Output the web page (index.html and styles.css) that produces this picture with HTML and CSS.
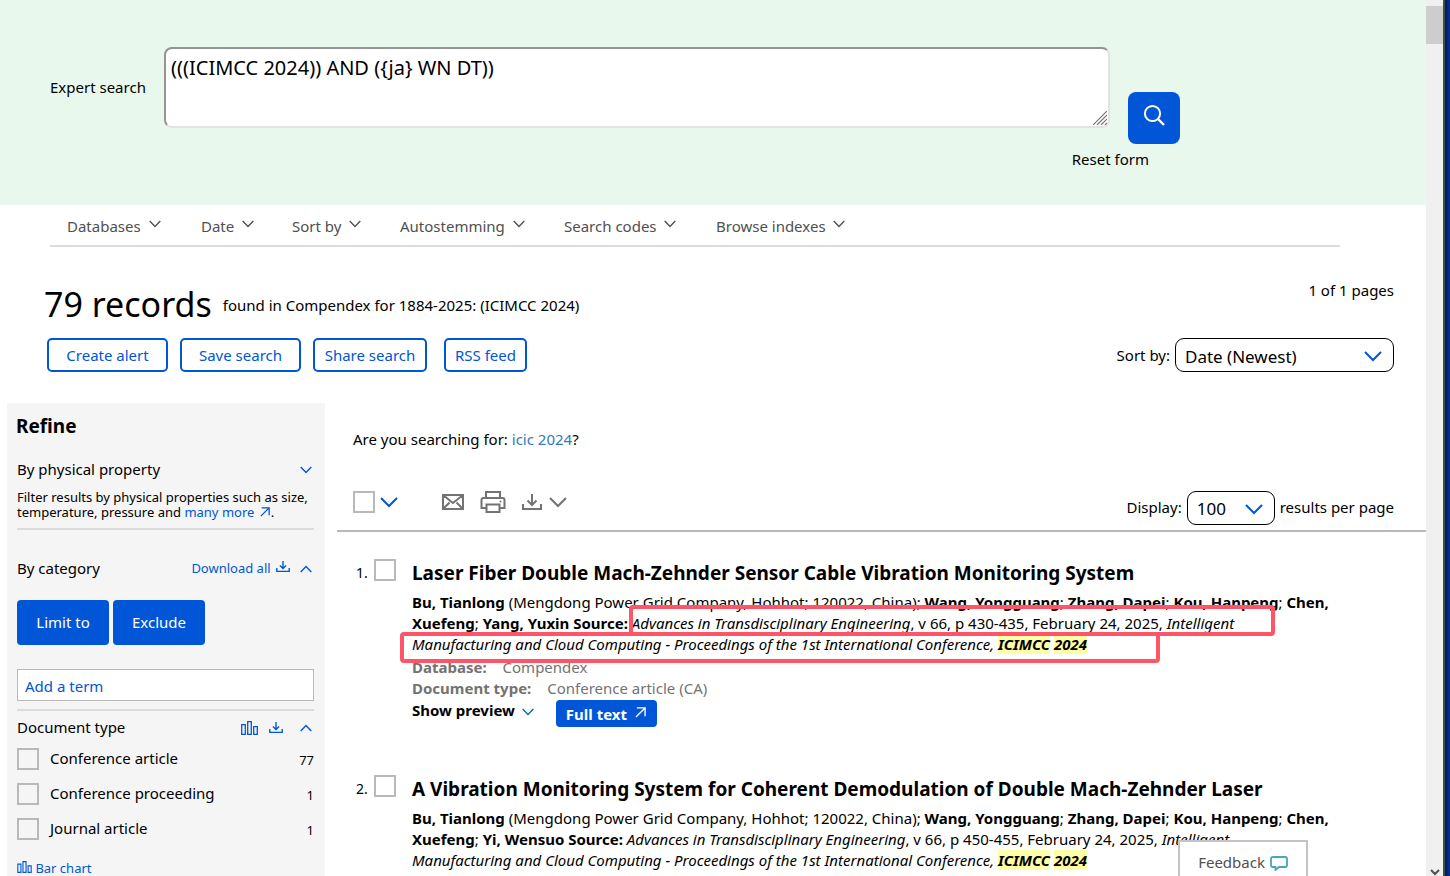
FILE: index.html
```html
<!DOCTYPE html>
<html lang="en">
<head>
<meta charset="UTF-8">
<title>Expert search results</title>
<link rel="stylesheet" href="styles.css">
</head>
<body>

<!-- Icons that are used more than once -->
<svg class="sprite" aria-hidden="true">
  <symbol id="down" viewBox="0 0 18 11"><path d="M1 1l8 8 8-8" fill="none" stroke="currentColor" stroke-width="2"/></symbol>
  <symbol id="down-thin" viewBox="0 0 12 8"><path d="M.7 1L6 6.500 11.300 1" fill="none" stroke="currentColor" stroke-width="1.400"/></symbol>
  <symbol id="up-thin" viewBox="0 0 12 8"><path d="M.7 7L6 1.500 11.300 7" fill="none" stroke="currentColor" stroke-width="1.400"/></symbol>
  <symbol id="download" viewBox="0 0 20 16"><path d="M1 10v5h18v-5M10 0v11M5.500 6.500L10 11l4.500-4.500" fill="none" stroke="currentColor" stroke-width="2"/></symbol>
  <symbol id="bars" viewBox="0 0 17 14"><path d="M.7 3.700h3.600v9.600H.7zM6.700.7h3.600v12.600H6.700zM12.700 5.700h3.600v7.600h-3.600z" fill="none" stroke="currentColor" stroke-width="1.300"/></symbol>
  <symbol id="arrow" viewBox="0 0 12 12"><path d="M1 11L11 1M2 1h9v9" fill="none" stroke="currentColor" stroke-width="1.500"/></symbol>
</svg>

<main class="page">

  <form class="search">
    <label class="search-label" for="query">Expert search</label>
    <div class="search-box">
      <textarea id="query" class="search-input" spellcheck="false">(((ICIMCC 2024)) AND ({ja} WN DT))</textarea>
      <svg class="grip" viewBox="0 0 14 14"><path d="M0 14L14 0M4 14L14 4M8 14l6-6M12 14l2-2" stroke="#777" stroke-width="1.200"/></svg>
    </div>
    <button type="button" class="search-button" aria-label="Search">
      <svg width="22" height="22" viewBox="0 0 22 22"><circle cx="9.500" cy="9.500" r="7.600" fill="none" stroke="#fff" stroke-width="2"/><path d="M15 15l6 6" stroke="#fff" stroke-width="2.400"/></svg>
    </button>
    <a class="reset" href="#">Reset form</a>
  </form>

  <nav class="filters">
    <a href="#">Databases <svg><use href="#down-thin"/></svg></a>
    <a href="#">Date <svg><use href="#down-thin"/></svg></a>
    <a href="#">Sort by <svg><use href="#down-thin"/></svg></a>
    <a href="#">Autostemming <svg><use href="#down-thin"/></svg></a>
    <a href="#">Search codes <svg><use href="#down-thin"/></svg></a>
    <a href="#">Browse indexes <svg><use href="#down-thin"/></svg></a>
  </nav>

  <header class="summary">
    <div class="summary-text">
      <h1 class="summary-title">79 records</h1>
      <p>found in Compendex for 1884-2025: (ICIMCC 2024)</p>
    </div>
    <p class="pages">1 of 1 pages</p>
  </header>

  <div class="actions">
    <button type="button" class="outline">Create alert</button>
    <button type="button" class="outline">Save search</button>
    <button type="button" class="outline outline-share">Share search</button>
    <button type="button" class="outline outline-rss">RSS feed</button>
    <div class="picker">
      <label for="sort">Sort by:</label>
      <span class="select">
        <select id="sort"><option>Date (Newest)</option></select>
        <svg><use href="#down"/></svg>
      </span>
    </div>
  </div>

  <div class="columns">

    <aside class="refine">
      <h2 class="refine-title">Refine</h2>

      <div class="facet-head">
        <h3>By physical property</h3>
        <button type="button" class="icon" aria-label="Expand"><svg class="chev"><use href="#down-thin"/></svg></button>
      </div>
      <p class="hint">Filter results by physical properties such as size, <br>temperature, pressure and <a href="#">many more <svg><use href="#arrow"/></svg></a>.</p>
      <hr class="rule">

      <div class="facet-head category">
        <h3>By category</h3>
        <a class="small" href="#">Download all <svg class="dl"><use href="#download"/></svg></a>
        <button type="button" class="icon" aria-label="Collapse"><svg class="chev"><use href="#up-thin"/></svg></button>
      </div>
      <div class="facet-buttons">
        <button type="button" class="solid">Limit to</button>
        <button type="button" class="solid">Exclude</button>
      </div>
      <input class="term" type="text" placeholder="Add a term" aria-label="Add a term">
      <hr class="rule">

      <div class="facet-head doctype">
        <h3>Document type</h3>
        <button type="button" class="icon" aria-label="Chart"><svg class="bars"><use href="#bars"/></svg></button>
        <button type="button" class="icon" aria-label="Download"><svg class="dl"><use href="#download"/></svg></button>
        <button type="button" class="icon" aria-label="Collapse"><svg class="chev"><use href="#up-thin"/></svg></button>
      </div>
      <ul class="facet-list">
        <li><input type="checkbox" class="box" id="ca"><label for="ca">Conference article</label><span>77</span></li>
        <li><input type="checkbox" class="box" id="cp"><label for="cp">Conference proceeding</label><span>1</span></li>
        <li><input type="checkbox" class="box" id="ja"><label for="ja">Journal article</label><span>1</span></li>
      </ul>
      <a class="small chart" href="#"><svg class="bars"><use href="#bars"/></svg> Bar chart</a>
    </aside>

    <section class="results">
      <p class="suggest">Are you searching for: <a href="#">icic 2024</a>?</p>

      <div class="toolbar">
        <input type="checkbox" class="box" aria-label="Select all">
        <button type="button" class="icon blue" aria-label="Select options"><svg width="18" height="11"><use href="#down"/></svg></button>
        <button type="button" class="icon mail" aria-label="Email">
          <svg width="22" height="16" viewBox="0 0 22 16"><path d="M1 1h20v14H1zM1 1l10 8L21 1M1.500 14.500l6-6M20.500 14.500l-6-6" fill="none" stroke="currentColor" stroke-width="2"/></svg>
        </button>
        <button type="button" class="icon" aria-label="Print">
          <svg width="26" height="22" viewBox="0 0 26 22"><path d="M6 7V1h14v6M6 17H1.500V9q0-2 2-2h19q2 0 2 2v8H20M6.500 13.500h13V21h-13z" fill="none" stroke="currentColor" stroke-width="2"/><circle cx="20.500" cy="10.500" r="1" fill="currentColor"/></svg>
        </button>
        <button type="button" class="icon save" aria-label="Download">
          <svg width="20" height="16"><use href="#download"/></svg>
          <svg width="18" height="11"><use href="#down"/></svg>
        </button>
        <div class="picker picker-count">
          <label for="count">Display:</label>
          <span class="select">
            <select id="count"><option>100</option></select>
            <svg><use href="#down"/></svg>
          </span>
          <span>results per page</span>
        </div>
      </div>

      <article class="record">
        <span class="number">1.</span>
        <input type="checkbox" class="box" aria-label="Select record 1">
        <div class="record-body">
          <h3 class="record-title">Laser Fiber Double Mach-Zehnder Sensor Cable Vibration Monitoring System</h3>
          <p class="source"><b>Bu, Tianlong</b> (Mengdong Power Grid Company, Hohhot; 120022, China); <b>Wang, Yongguang</b>; <b>Zhang, Dapei</b>; <b>Kou, Hanpeng</b>; <b>Chen,<br>Xuefeng</b>; <b>Yang, Yuxin</b> <b>Source:</b> <i>Advances in Transdisciplinary Engineering</i>, v 66, p 430-435, February 24, 2025, <i>Intelligent<br>Manufacturing and Cloud Computing - Proceedings of the 1st International Conference, <mark>ICIMCC</mark> <mark>2024</mark></i></p>
          <div class="meta">
            <p><b>Database:</b> <span>Compendex</span></p>
            <p><b>Document type:</b> <span>Conference article (CA)</span></p>
          </div>
          <div class="record-links">
            <a class="preview" href="#">Show preview <svg><use href="#down-thin"/></svg></a>
            <a class="fulltext" href="#">Full text <svg><use href="#arrow"/></svg></a>
          </div>
          <span class="outline-mark mark-first"></span>
          <span class="outline-mark mark-second"></span>
        </div>
      </article>

      <article class="record">
        <span class="number">2.</span>
        <input type="checkbox" class="box" aria-label="Select record 2">
        <div class="record-body">
          <h3 class="record-title">A Vibration Monitoring System for Coherent Demodulation of Double Mach-Zehnder Laser</h3>
          <p class="source"><b>Bu, Tianlong</b> (Mengdong Power Grid Company, Hohhot; 120022, China); <b>Wang, Yongguang</b>; <b>Zhang, Dapei</b>; <b>Kou, Hanpeng</b>; <b>Chen,<br>Xuefeng</b>; <b>Yi, Wensuo</b> <b>Source:</b> <i>Advances in Transdisciplinary Engineering</i>, v 66, p 450-455, February 24, 2025, <i>Intelligent<br>Manufacturing and Cloud Computing - Proceedings of the 1st International Conference, <mark>ICIMCC</mark> <mark>2024</mark></i></p>
        </div>
      </article>
    </section>
  </div>
</main>

<div class="scrollbar">
  <div class="thumb"></div>
  <svg width="10" height="7" viewBox="0 0 10 7"><path d="M1 1l4 4 4-4" fill="none" stroke="#505050" stroke-width="2"/></svg>
</div>
<div class="desktop"></div>

<button type="button" class="feedback">Feedback
  <svg width="18" height="15" viewBox="0 0 18 15"><path d="M3 1h12q2 0 2 2v6q0 2-2 2H9l-3.500 3V11H3q-2 0-2-2V3q0-2 2-2z" fill="none" stroke="#4ba3c3" stroke-width="1.800"/></svg>
</button>

</body>
</html>
```
FILE: styles.css
```css
* {
  box-sizing: border-box;
}

body {
  display: flex;
  height: 100vh;
  margin: 0;
  overflow: hidden;
  background: #fff;
  color: #000;
  font: 15px/21px "Noto Sans", sans-serif;
}

h1, h2, h3, p, ul {
  margin: 0;
  padding: 0;
}

button, input, select, textarea {
  margin: 0;
  font: inherit;
  color: inherit;
}

a {
  color: #0056d6;
  text-decoration: none;
}

.sprite {
  position: absolute;
  width: 0;
  height: 0;
}

.page {
  flex: 1;
  min-width: 0;
  overflow: hidden;
}

/* Search form */
.search {
  display: grid;
  grid-template-columns: 114px 1fr 52px;
  grid-template-rows: 97px auto;
  height: 205px;
  padding: 47px 246px 0 50px;
  background: #e8f8ed;
}

.search-label {
  padding-top: 30px;
}

.search-box {
  position: relative;
  height: 81px;
  margin-right: 18px;
}

.search-input {
  display: block;
  width: 100%;
  height: 100%;
  padding: 5px;
  border: 2px solid;
  border-color: #949494 #e3e3e3 #e3e3e3 #949494;
  border-radius: 8px;
  background: #fff;
  font-size: 20px;
  line-height: 28px;
  resize: none;
}

.grip {
  position: absolute;
  right: 3px;
  bottom: 3px;
  width: 14px;
  height: 14px;
}

.search-button {
  align-self: end;
  height: 52px;
  padding: 0 0 6px;
  border: 0;
  border-radius: 8px;
  background: #0056d6;
}

.search-button svg {
  vertical-align: middle;
}

.reset {
  grid-column: 1 / 4;
  padding: 5px 31px 0 0;
  color: #000;
  text-align: right;
}

/* Filter menu */
.filters {
  display: grid;
  grid-template-columns: 134px 91px 108px 164px 152px auto;
  height: 42px;
  margin: 0 86px 0 50px;
  padding: 11px 0 0 17px;
  border-bottom: 2px solid #dcdcdc;
}

.filters a {
  color: #505050;
}

.filters svg {
  width: 12px;
  height: 8px;
  margin: 0 0 4px 4px;
}

/* Result summary */
.summary {
  display: flex;
  justify-content: space-between;
  height: 91px;
  padding: 33px 32px 0 44px;
}

.summary-text {
  display: flex;
  align-items: center;
  gap: 11px;
  height: 50px;
}

.summary-title {
  padding-bottom: 3px;
  font-size: 34px;
  font-weight: 400;
  line-height: 46px;
}

.actions {
  display: flex;
  gap: 12px;
  padding: 0 32px 31px 47px;
}

.outline {
  width: 121px;
  height: 34px;
  padding: 0;
  border: 2px solid #0056d6;
  border-radius: 5px;
  background: #fff;
  color: #0056d6;
}

.outline-share {
  width: 114px;
}

.outline-rss {
  width: 83px;
  margin-left: 5px;
}

.picker {
  display: flex;
  align-items: center;
  gap: 5px;
  margin-left: auto;
}

.select {
  position: relative;
}

.select select {
  display: block;
  width: 219px;
  height: 34px;
  padding: 2px 9px 0;
  border: 1px solid #000;
  border-radius: 9px;
  background: #fff;
  font-size: 17px;
  appearance: none;
}

.picker-count .select select {
  width: 88px;
}

.select svg {
  position: absolute;
  top: 13px;
  right: 12px;
  width: 18px;
  height: 11px;
  color: #0056d6;
  pointer-events: none;
}

.columns {
  display: grid;
  grid-template-columns: 318px 1fr;
  gap: 12px;
  padding-left: 7px;
}

/* Refine column */
.refine {
  padding: 10px 11px 0 10px;
  background: #f5f5f5;
}

.refine-title {
  margin-left: -1px;
  font-size: 19px;
  line-height: 26px;
}

.facet-head {
  display: flex;
  align-items: center;
  margin-top: 20px;
  padding-right: 2px;
}

.facet-head h3 {
  flex: 1;
  font-size: 15px;
  font-weight: 400;
}

.icon {
  display: flex;
  align-items: center;
  padding: 0;
  border: 0;
  background: none;
  color: #0056d6;
}

.chev {
  width: 12px;
  height: 8px;
}

.dl {
  width: 14px;
  height: 11px;
}

.bars {
  width: 17px;
  height: 14px;
}

.hint {
  margin-top: 10px;
  font-size: 13px;
  line-height: 15px;
  white-space: nowrap;
}

.hint svg {
  width: 10px;
  height: 10px;
  margin: 0 1px 0 2px;
}

.rule {
  height: 2px;
  margin: 8px 0 0;
  border: 0;
  background: #dcdcdc;
}

.category {
  margin-top: 28px;
}

.small {
  font-size: 13px;
}

.category .small {
  margin-right: 10px;
}

.category .dl {
  margin: 0 0 1px 2px;
}

.facet-buttons {
  display: flex;
  gap: 4px;
  margin-top: 21px;
}

.solid {
  width: 92px;
  height: 45px;
  padding: 0;
  border: 0;
  border-radius: 4px;
  background: #0056d6;
  color: #fff;
}

.term {
  display: block;
  width: 100%;
  height: 32px;
  margin-top: 24px;
  padding: 2px 7px 0;
  border: 1px solid #b9b9b9;
  background: #fff;
}

.term::placeholder {
  color: #0056d6;
}

.doctype {
  gap: 11px;
  margin-top: 6px;
}

.doctype .icon:last-child {
  margin-left: 6px;
}

.facet-list {
  display: grid;
  gap: 12px;
  margin-top: 10px;
  list-style: none;
}

.facet-list li {
  display: flex;
  gap: 11px;
}

.facet-list span {
  margin-left: auto;
  padding-top: 2px;
  font-size: 13px;
}

.chart {
  display: block;
  margin-top: 17px;
}

.chart .bars {
  width: 15px;
  height: 12px;
}

.box {
  flex: none;
  width: 22px;
  height: 22px;
  border: 2px solid #b9b9b9;
  appearance: none;
}

/* Result list */
.suggest {
  padding: 26px 0 0 16px;
}

.suggest a {
  color: #337ab7;
}

.toolbar {
  display: flex;
  align-items: center;
  height: 82px;
  padding: 24px 32px 0 16px;
  border-bottom: 2px solid #b9b9b9;
}

.toolbar .icon {
  margin-left: 16px;
  color: #737373;
}

.toolbar .blue {
  margin-left: 5px;
  color: #0056d6;
}

.toolbar .mail {
  margin-left: 44px;
}

.save {
  gap: 7px;
}

.picker-count {
  margin-top: 11px;
}

.record {
  display: flex;
  padding: 27px 0 21px 19px;
}

.number {
  width: 18px;
  padding-top: 3px;
  font-size: 14px;
}

.record-body {
  position: relative;
  flex: 1;
  margin-left: 16px;
  white-space: nowrap;
}

.record-title {
  font-size: 19px;
  line-height: 28px;
}

.source {
  margin-top: 5px;
}

mark {
  background: #ffffa6;
  font-weight: 700;
}

.meta {
  margin-top: 2px;
  color: #737373;
}

.meta span {
  margin-left: 12px;
}

.record-links {
  display: flex;
  gap: 22px;
  margin-top: 1px;
}

.preview {
  color: #000;
  font-weight: 700;
}

.preview svg {
  width: 12px;
  height: 8px;
  margin-left: 3px;
  color: #007398;
}

.fulltext {
  height: 27px;
  padding: 4px 11px 0 10px;
  border-radius: 4px;
  background: #0056d6;
  color: #fff;
  font-weight: 700;
}

.fulltext svg {
  width: 11px;
  height: 11px;
  margin: 0 0 2px 4px;
}

/* Red frames drawn over the source lines */
.outline-mark {
  position: absolute;
  height: 31px;
  border: 4px solid #ff5568;
  border-radius: 4px;
}

.mark-first {
  top: 46px;
  left: 217px;
  width: 646px;
}

.mark-second {
  top: 73px;
  left: -12px;
  width: 760px;
}

/* Window edge */
.scrollbar {
  display: flex;
  flex-direction: column;
  justify-content: space-between;
  align-items: center;
  width: 17px;
  padding-top: 6px;
  background: #f0f0f0;
}

.thumb {
  width: 100%;
  height: 38px;
  background: #cdcdcd;
}

.desktop {
  width: 7px;
  border-left: 2px solid #454b55;
  background: linear-gradient(to right, #001c50, #043390);
}

.feedback {
  position: fixed;
  right: 142px;
  bottom: 0;
  width: 130px;
  height: 36px;
  padding: 6px 0 0;
  border: 2px solid #c4c4c4;
  border-bottom: 0;
  background: #fff;
  color: #505050;
}

.feedback svg {
  margin-left: 1px;
  vertical-align: -3px;
}
```
